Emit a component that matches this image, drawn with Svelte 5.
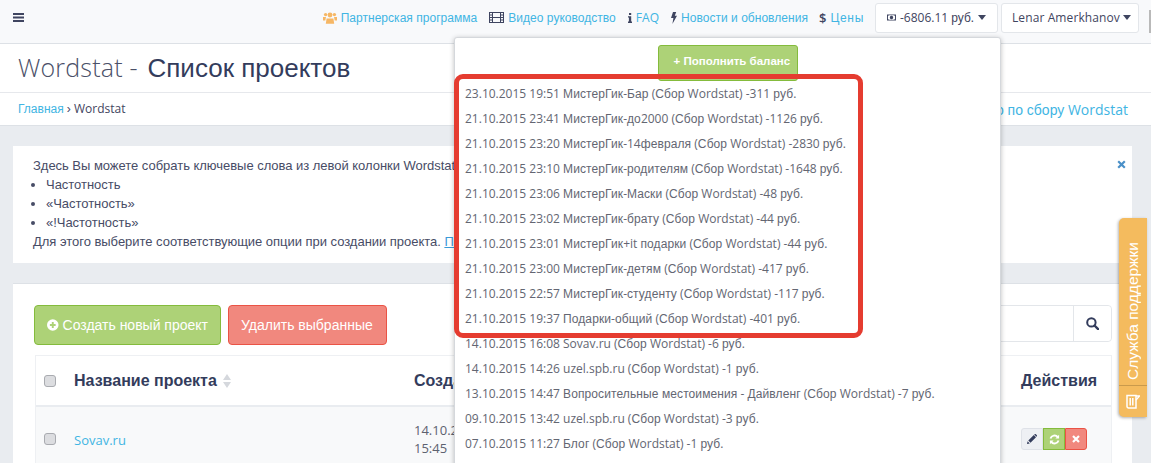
<script lang="ts">
  // Latin and digits are Open Sans, Cyrillic falls back to an Arial look
  const runs = (text: string) =>
    text.split(/([А-Яа-яЁё«»›]+(?:[ ]+[А-Яа-яЁё«»›]+)*)/).filter(Boolean).map((part) => ({
      part,
      cyr: /[А-Яа-яЁё«»›]/.test(part)
    }));

  const payments = [
    "23.10.2015 19:51 МистерГик-Бар (Сбор Wordstat) -311 руб.",
    "21.10.2015 23:41 МистерГик-до2000 (Сбор Wordstat) -1126 руб.",
    "21.10.2015 23:20 МистерГик-14февраля (Сбор Wordstat) -2830 руб.",
    "21.10.2015 23:10 МистерГик-родителям (Сбор Wordstat) -1648 руб.",
    "21.10.2015 23:06 МистерГик-Маски (Сбор Wordstat) -48 руб.",
    "21.10.2015 23:02 МистерГик-брату (Сбор Wordstat) -44 руб.",
    "21.10.2015 23:01 МистерГик+it подарки (Сбор Wordstat) -44 руб.",
    "21.10.2015 23:00 МистерГик-детям (Сбор Wordstat) -417 руб.",
    "21.10.2015 22:57 МистерГик-студенту (Сбор Wordstat) -117 руб.",
    "21.10.2015 19:37 Подарки-общий (Сбор Wordstat) -401 руб.",
    "14.10.2015 16:08 Sovav.ru (Сбор Wordstat) -6 руб.",
    "14.10.2015 14:26 uzel.spb.ru (Сбор Wordstat) -1 руб.",
    "13.10.2015 14:47 Вопросительные местоимения - Дайвленг (Сбор Wordstat) -7 руб.",
    "09.10.2015 13:42 uzel.spb.ru (Сбор Wordstat) -3 руб.",
    "07.10.2015 11:27 Блог (Сбор Wordstat) -1 руб."
  ];
</script>

{#snippet t(text)}{#each runs(text) as r}{#if r.cyr}<span class="cyr">{r.part}</span>{:else}{r.part}{/if}{/each}{/snippet}

{#snippet caret()}
  <svg class="caret" viewBox="0 0 8 5" width="8" height="5"><path d="M0 0h8L4 5z" /></svg>
{/snippet}

<div class="page">
  <header class="topbar">
    <svg class="burger" viewBox="0 0 11 9" width="11" height="9"><path d="M0 0h11v2H0zM0 3.5h11v2H0zM0 7h11v2H0z" /></svg>
    <nav class="toplinks">
      <a href="#p">
        <svg viewBox="0 0 14 12" width="14" height="12" fill="#f6b765">
          <circle cx="7" cy="3" r="2.4" /><circle cx="2.6" cy="2.6" r="1.7" /><circle cx="11.4" cy="2.6" r="1.7" />
          <path d="M3.6 6.4h6.8l.8 5.4H2.8zM0 5h3l-.7 3.6H0zM11 5h3v3.6h-2.3z" />
        </svg>
        <span>{@render t("Партнерская программа")}</span>
      </a>
      <a href="#v">
        <svg viewBox="0 0 15 11" width="15" height="11" fill="none" stroke="#3f4560"><rect x=".5" y=".5" width="14" height="10" /><path d="M3.5 .5v10M11.5 .5v10M3.5 5.5h8M.5 3h3M.5 5.5h3M.5 8h3M11.5 3h3M11.5 5.5h3M11.5 8h3" /></svg>
        <span>{@render t("Видео руководство")}</span>
      </a>
      <a href="#f">
        <svg viewBox="0 0 4 10" width="4" height="10" fill="#3f4560"><path d="M1 0h2.2v2H1zM0 3.2h3.2V8.6H4V10H0V8.6h.9V4.6H0z" /></svg>
        <span>FAQ</span>
      </a>
      <a href="#n">
        <svg viewBox="0 0 6 12" width="6" height="12" fill="#3f4560"><path d="M2 0h3.2L3.8 3.8H6L1.4 12l1-6H0z" /></svg>
        <span>{@render t("Новости и обновления")}</span>
      </a>
      <a href="#c" class="priceslink">
        <span class="dollar">$</span>
        <span class="prices">{@render t("Цены")}</span>
      </a>
    </nav>
    <button class="topbtn balance">
      <svg viewBox="0 0 13 9" width="13" height="9"><path fill="#3f4560" fill-rule="evenodd" d="M0 0h13v9H0zM2.4 1.3a1 1 0 0 1-1 1v4.4a1 1 0 0 1 1 1h8.2a1 1 0 0 1 1-1V2.3a1 1 0 0 1-1-1zM6.5 2a2.5 2.5 0 1 1 0 5 2.5 2.5 0 0 1 0-5z" /></svg>
      <span>{@render t("-6806.11 руб.")}</span>
      {@render caret()}
    </button>
    <button class="topbtn user"><span>Lenar Amerkhanov</span> {@render caret()}</button>
  </header>

  <section class="titlebar">
    <h1><span class="light">Wordstat -</span> <span class="cyr">Список проектов</span></h1>
  </section>

  <section class="crumbs">
    <div><a href="#h">{@render t("Главная")}</a> <span class="cyr">›</span> Wordstat</div>
    <a href="#i" class="helplink">{@render t("Инфо по сбору Wordstat")}</a>
  </section>

  <main class="content">
    <div class="notice">
      <button class="close" aria-label="Закрыть">
        <svg viewBox="0 0 9 9" width="9" height="9"><path d="M1.2 1.2l6.6 6.6M7.8 1.2L1.2 7.8" stroke="#4a90c8" stroke-width="2.2" /></svg>
      </button>
      <div class="cyr notice-text">
        Здесь Вы можете собрать ключевые слова из левой колонки Wordstat
        <ul>
          <li>Частотность</li>
          <li>«Частотность»</li>
          <li>«!Частотность»</li>
        </ul>
        Для этого выберите соответствующие опции при создании проекта. <a href="#m">Подробнее</a>
      </div>
    </div>

    <div class="card">
      <div class="toolbar">
        <button class="btn green">
          <svg viewBox="0 0 12 12" width="12" height="12"><path fill="#fff" fill-rule="evenodd" d="M6 0a6 6 0 1 1 0 12A6 6 0 0 1 6 0zM5 3v2H3v2h2v2h2V7h2V5H7V3z" /></svg>
          <span class="cyr">Создать новый проект</span>
        </button>
        <button class="btn red"><span class="cyr">Удалить выбранные</span></button>
        <div class="search">
          <input type="text" aria-label="Поиск" />
          <button class="searchbtn" aria-label="Поиск">
            <svg viewBox="0 0 13 13" width="13" height="13" fill="none" stroke="#333c5c" stroke-width="2"><circle cx="5.4" cy="5.4" r="4.2" /><path d="M8.5 8.5l3.6 3.6" stroke-linecap="round" stroke-width="2.4" /></svg>
          </button>
        </div>
      </div>

      <div class="table">
        <div class="row head">
          <span class="check"></span>
          <div class="col-name">
            <span class="cyr">Название проекта</span>
            <svg viewBox="0 0 8 14" width="8" height="14" fill="#d5d8dd"><path d="M4 0l4 6H0zM4 14L0 8h8z" /></svg>
          </div>
          <div class="col-date cyr">Создан</div>
          <div class="col-actions cyr">Действия</div>
        </div>
        <div class="row body">
          <span class="check"></span>
          <div class="col-name"><a href="#s">Sovav.ru</a></div>
          <div class="col-date">14.10.2015<br />15:45</div>
          <div class="col-actions">
            <div class="actions">
              <button class="act" aria-label="Изменить">
                <svg viewBox="0 0 10 10" width="10" height="10" fill="#333c5c"><path d="M0 10l.6-2.8 2.2 2.2zM1.3 6.5L6.8 1l2.2 2.2-5.5 5.5zM7.5.3a1 1 0 0 1 1.4 0l.8.8a1 1 0 0 1 0 1.4l-.3.3L7.2.6z" /></svg>
              </button>
              <button class="act act-green" aria-label="Обновить">
                <svg viewBox="0 0 12 12" width="11" height="11" fill="none" stroke="#fff" stroke-width="2"><path d="M1.6 5a4.6 4.6 0 0 1 8-1.6M10.4 7a4.6 4.6 0 0 1-8 1.6" /><path d="M11 .8v4H7zM1 11.2v-4h4z" fill="#fff" stroke="none" /></svg>
              </button>
              <button class="act act-red" aria-label="Удалить">
                <svg viewBox="0 0 8 8" width="8" height="8"><path d="M1 1l6 6M7 1L1 7" stroke="#fff" stroke-width="2.2" /></svg>
              </button>
            </div>
          </div>
        </div>
      </div>
    </div>
  </main>

  <div class="dropdown">
    <div class="refill"><button class="refillbtn cyr">+ Пополнить баланс</button></div>
    <ul class="payments">
      {#each payments as line}
        <li>{@render t(line)}</li>
      {/each}
    </ul>
  </div>

  <div class="callout"></div>

  <aside class="support">
    <span class="cyr support-text">Служба поддержки</span>
    <div class="support-icon">
      <svg viewBox="0 0 14 15" width="14" height="15" fill="none" stroke="#fff" stroke-width="1.5"><path d="M1 1.5h9v12.5H2.5A1.5 1.5 0 0 1 1 12.5zM4.2 4v7.5M6.8 4v7.5" /><path d="M10 2h3.6L10 6" stroke-width="1.3" /></svg>
    </div>
  </aside>

  <div class="scrollmark"></div>
</div>

<style>
  :global(body) {
    margin: 0;
    background: #e9ecf0;
    overflow: hidden;
  }
  * {
    box-sizing: border-box;
  }
  .page {
    position: relative;
    height: 463px;
    overflow: hidden;
    font-family: "Open Sans", sans-serif;
    font-size: 12px;
    color: #3f4560;
  }
  .cyr {
    font-family: "Liberation Sans", Arial, sans-serif;
  }
  a {
    color: #41b5e3;
    text-decoration: none;
  }
  button {
    font: inherit;
    cursor: pointer;
  }
  .topbar {
    display: flex;
    align-items: center;
    height: 44px;
    padding: 3px 12px 11px 13px;
    background: #f8f9fb;
    border-bottom: 1px solid #dde1e6;
  }
  .burger {
    fill: #3f4560;
    margin-top: -1px;
  }
  .toplinks {
    display: flex;
    gap: 12px;
    margin-left: auto;
    margin-right: 11px;
  }
  .toplinks a {
    display: flex;
    align-items: center;
    gap: 4px;
    font-size: 12px;
    letter-spacing: 0.03px;
  }
  .priceslink {
    margin-left: -1px;
  }
  .prices {
    letter-spacing: 0.7px;
  }
  .dollar {
    color: #3f4560;
    font-size: 13px;
    font-weight: 600;
  }
  .topbtn {
    display: flex;
    align-items: center;
    gap: 4px;
    height: 30px;
    background: #fff;
    border: 1px solid #e3e6ea;
    border-radius: 3px;
    color: #3f4560;
    font-size: 12px;
    white-space: nowrap;
  }
  .topbtn .caret {
    flex: none;
  }
  .balance {
    width: 123px;
    padding: 0 11px;
    margin-right: 3px;
  }
  .user {
    width: 138px;
    padding: 0 10px;
    gap: 3px;
    letter-spacing: 0.1px;
  }
  .caret {
    fill: #3f4560;
  }
  .titlebar {
    height: 49px;
    padding: 0 18px 2px;
    background: #fff;
    border-bottom: 1px solid #e6e8ec;
    display: flex;
    align-items: center;
  }
  h1 {
    margin: 0;
    font-size: 26px;
    font-weight: 400;
    color: #333c5c;
  }
  h1 .cyr {
    margin-left: 3px;
  }
  .light {
    font-size: 25px;
    font-weight: 300;
    letter-spacing: 0.2px;
    color: #4a5068;
  }
  .crumbs {
    display: flex;
    justify-content: space-between;
    align-items: center;
    height: 33px;
    padding: 0 23px 0 18px;
    background: #fff;
    border-bottom: 1px solid #dde1e6;
  }
  .crumbs > div {
    margin-top: -2px;
  }
  .helplink {
    font-size: 14px;
  }
  .content {
    padding: 20px 19px 0 13px;
  }
  .notice {
    position: relative;
    background: #fff;
    height: 117px;
    padding: 10px 20px;
    margin-bottom: 20px;
  }
  .notice-text {
    font-size: 13px;
    line-height: 19px;
    letter-spacing: -0.03px;
    color: #474c66;
  }
  .notice ul {
    margin: 0;
    padding-left: 13px;
  }
  .notice a {
    color: #3a9bd8;
    text-decoration: underline;
  }
  .close {
    position: absolute;
    top: 10px;
    right: 6px;
    background: none;
    border: 0;
    padding: 0;
  }
  .card {
    background: #fff;
    padding: 21px 20px 0 21px;
    height: 300px;
    border-top: 1px solid #dde1e6;
  }
  .toolbar {
    display: flex;
    gap: 7px;
    height: 40px;
  }
  .btn {
    display: flex;
    align-items: center;
    gap: 4px;
    height: 40px;
    padding: 0 12px;
    border-radius: 4px;
    color: #fff;
    font-size: 14px;
    white-space: nowrap;
  }
  .green {
    width: 187px;
    background: #add277;
    border: 1px solid #84bb3c;
  }
  .red {
    width: 159px;
    background: #f1887e;
    border: 1px solid #ea5345;
  }
  .search {
    display: flex;
    margin-left: auto;
    height: 37px;
    width: 400px;
    border: 1px solid #e3e6ea;
    border-radius: 4px;
  }
  .search input {
    flex: 1;
    min-width: 0;
    border: 0;
    background: transparent;
    outline: 0;
  }
  .searchbtn {
    width: 38px;
    background: #fff;
    border: 0;
    border-left: 1px solid #e3e6ea;
    border-radius: 0 4px 4px 0;
    padding: 0;
    display: grid;
    place-items: center;
  }
  .table {
    margin: 10px 0 0 1px;
    border: 1px solid #eef0f3;
    border-bottom: 0;
  }
  .row {
    display: flex;
    align-items: center;
    padding-left: 8px;
  }
  .head {
    height: 51px;
    background: #fff;
    font-size: 16px;
    font-weight: 700;
    color: #333c5c;
    border-bottom: 2px solid #e9ecf0;
  }
  .body {
    height: 64px;
    background: #f8f9fa;
    font-size: 13px;
    color: #5d6270;
  }
  .body .col-name {
    padding-top: 2px;
  }
  .check {
    flex: none;
    width: 12px;
    height: 12px;
    border: 1px solid #a9abb0;
    border-radius: 3px;
    background: #dcdde0;
  }
  .col-name {
    display: flex;
    align-items: center;
    gap: 6px;
    width: 340px;
    margin-left: 18px;
    font-size: 13px;
  }
  .head .col-name {
    font-size: 16px;
  }
  .col-date {
    width: 607px;
    line-height: 18px;
  }
  .col-actions {
    flex: 1;
  }
  .actions {
    display: flex;
  }
  .act {
    width: 22px;
    height: 22px;
    padding: 0;
    display: grid;
    place-items: center;
    background: #eef0f4;
    border: 1px solid #dfe2e8;
    border-radius: 3px 0 0 3px;
  }
  .act-green {
    background: #add277;
    border-color: #84bb3c;
    border-radius: 0;
  }
  .act-red {
    background: #f1887e;
    border-color: #ea5345;
    border-radius: 0 3px 3px 0;
  }
  .dropdown {
    position: absolute;
    top: 37px;
    left: 454px;
    width: 547px;
    height: 440px;
    background: #fff;
    border: 1px solid #d5d8dc;
    border-radius: 3px;
    box-shadow: 0 1px 5px rgba(0, 0, 0, 0.25);
  }
  .refill {
    display: flex;
    justify-content: center;
    padding-top: 7px;
  }
  .refillbtn {
    width: 140px;
    height: 36px;
    padding: 0 0 4px 15px;
    text-align: left;
    background: #add277;
    border: 1px solid #84bb3c;
    border-radius: 3px;
    color: #fff;
    font-size: 11.5px;
    font-weight: 700;
    white-space: nowrap;
  }
  .payments {
    list-style: none;
    margin: 0;
    padding: 0 0 0 10px;
    position: absolute;
    top: 43px;
    left: 0;
    color: #636672;
    font-size: 12px;
  }
  .payments li {
    height: 25px;
    line-height: 25px;
    white-space: nowrap;
  }
  .payments .cyr {
    letter-spacing: 0.1px;
  }
  .callout {
    position: absolute;
    top: 74px;
    left: 454px;
    width: 409px;
    height: 264px;
    border: 5px solid #e53c30;
    border-radius: 9px;
  }
  .support {
    position: absolute;
    top: 218px;
    left: 1119px;
    width: 28px;
    height: 199px;
    display: flex;
    flex-direction: column;
    align-items: center;
    background: #f4bb5e;
    border-radius: 5px 0 0 5px;
    box-shadow: -1px 1px 3px rgba(0, 0, 0, 0.3);
    color: #fff;
  }
  .support-text {
    height: 167px;
    padding-top: 5px;
    writing-mode: vertical-rl;
    transform: rotate(180deg);
    font-size: 15.5px;
    text-align: left;
    line-height: 28px;
    white-space: nowrap;
  }
  .support-icon {
    flex: 1;
    width: 100%;
    display: grid;
    place-items: center;
    border-top: 1px solid #c99a4c;
  }
  .scrollmark {
    position: absolute;
    top: 10px;
    right: 0;
    width: 2px;
    height: 23px;
    background: #b9b9b9;
  }
</style>
